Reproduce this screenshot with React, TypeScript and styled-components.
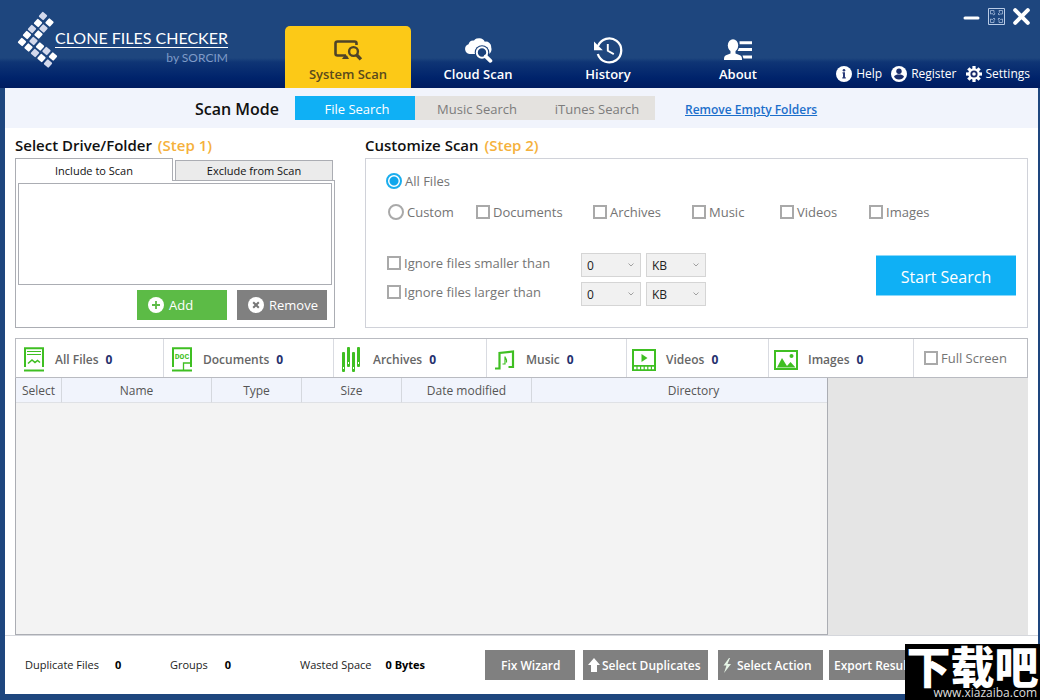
import React from "react";
import styled, { createGlobalStyle, css } from "styled-components";

const GlobalStyle = createGlobalStyle`
  *, *::before, *::after { box-sizing: border-box; }
  body { margin: 0; background: #1e467e; }
  body, button, select, input { font-family: "Open Sans", "Noto Sans", "Noto Sans CJK SC", sans-serif; }
  button { border: 0; padding: 0; cursor: pointer; }
  svg { display: block; flex: none; }
`;

/* ---------- Window frame ---------- */

const Window = styled.div`
  position: relative;
  display: flex;
  flex-direction: column;
  min-height: 100vh;
  padding: 0 2px 6px 5px;
  background: #1e467e;
`;

const Header = styled.header`
  display: flex;
  height: 88px;
  margin: 0 -2px 0 -5px;
  padding-left: 5px;
  background: linear-gradient(#1e467e 0, #1e467e 58px, #0f3575 62px, #00236b 78px, #001c60 88px);
`;

const Brand = styled.div`
  display: flex;
  flex: none;
  width: 278px;
  padding: 12px 0 0 13px;
`;

const BrandText = styled.div`
  padding-top: 16px;
  text-align: right;
`;

const BrandName = styled.div`
  border-bottom: 1px solid #fff;
  color: #fff;
  font-family: Lato, "Open Sans", sans-serif;
  font-size: 16px;
  line-height: 19px;
  white-space: nowrap;
`;

const BrandBy = styled.div`
  color: #7f9bc8;
  font-family: Lato, "Open Sans", sans-serif;
  font-size: 12px;
  line-height: 20px;
`;

const Nav = styled.nav`
  display: flex;
  align-items: flex-end;
`;

const NavTab = styled.button<{ $active?: boolean }>`
  display: flex;
  flex-direction: column;
  align-items: center;
  width: 126px;
  height: 62px;
  margin: 0 2px;
  padding-top: 10px;
  border-radius: 5px 5px 0 0;
  background: ${(p) => (p.$active ? "#fcc917" : "transparent")};
  color: ${(p) => (p.$active ? "#5a4a1c" : "#fff")};
  font-size: 13px;
  font-weight: 600;
  line-height: 20px;
`;

const HeaderSide = styled.div`
  display: flex;
  flex: 1;
  flex-direction: column;
  align-items: flex-end;
  justify-content: space-between;
  padding: 8px 10px 4px 0;
`;

const WindowControls = styled.div`
  display: flex;
  gap: 8px;
`;

const ControlButton = styled.button`
  width: 17px;
  height: 17px;
  background: transparent;
  color: #fff;
`;

const HeaderLinks = styled.div`
  display: flex;
  gap: 9px;
`;

const HeaderLink = styled.a`
  display: flex;
  align-items: center;
  gap: 4px;
  color: #fff;
  font-size: 12px;
  line-height: 20px;
  text-decoration: none;
`;

/* ---------- Scan mode bar ---------- */

const ModeBar = styled.div`
  display: flex;
  align-items: center;
  height: 40px;
  padding: 0 0 0 190px;
  background: #f1f4fc;
`;

const ModeLabel = styled.div`
  width: 100px;
  padding-top: 2px;
  color: #111;
  font-size: 16px;
  font-weight: 600;
`;

const ModeButton = styled.button<{ $active?: boolean }>`
  width: 120px;
  height: 24px;
  padding: 1px 0 0 4px;
  background: ${(p) => (p.$active ? "#0fb0f5" : "#e4e2df")};
  color: ${(p) => (p.$active ? "#fff" : "#7c7c7c")};
  font-size: 13px;
`;

const EmptyLink = styled.a`
  margin-left: 30px;
  padding-top: 2px;
  color: #1c6fcb;
  font-size: 12px;
  font-weight: 600;
`;

/* ---------- Main area ---------- */

const Main = styled.main`
  display: flex;
  flex: 1;
  flex-direction: column;
  padding: 8px 10px 0;
  background: #fff;
`;

const Steps = styled.div`
  display: flex;
  gap: 30px;
`;

const DriveStep = styled.section`
  flex: none;
  width: 320px;
`;

const CustomizeStep = styled.section`
  display: flex;
  flex: 1;
  flex-direction: column;
`;

const StepTitle = styled.h2`
  margin: 0;
  height: 22px;
  color: #111;
  font-size: 15px;
  font-weight: 600;
  line-height: 18px;
  white-space: nowrap;

  span { margin-left: 2px; color: #f5b13c; }
`;

const FolderTabs = styled.div`
  display: flex;
  align-items: flex-end;
  gap: 2px;
  height: 22px;
`;

const FolderTab = styled.button<{ $active?: boolean }>`
  width: 158px;
  height: 20px;
  border: 1px solid #abadb3;
  border-bottom: 0;
  background: #ebebeb;
  color: #111;
  font-size: 11px;
  line-height: 19px;

  ${(p) =>
    p.$active &&
    css`
      position: relative;
      height: 23px;
      margin-bottom: -1px;
      background: #fff;
    `}
`;

const FolderBox = styled.div`
  height: 148px;
  padding: 2px;
  border: 1px solid #abadb3;
`;

const FolderList = styled.div`
  height: 102px;
  border: 1px solid #abadb3;
`;

const FolderActions = styled.div`
  display: flex;
  justify-content: flex-end;
  gap: 10px;
  padding: 5px 5px 0 0;
`;

const FolderButton = styled.button<{ $tone: string }>`
  display: flex;
  align-items: center;
  gap: 5px;
  width: 90px;
  height: 30px;
  padding-left: 11px;
  background: ${(p) => p.$tone};
  color: #fff;
  font-size: 13px;
`;

const CustomizeBox = styled.div`
  display: flex;
  flex: 1;
  flex-direction: column;
  padding: 12px 11px 0 20px;
  border: 1px solid #d0d2d9;
`;

const OptionRow = styled.div`
  display: grid;
  grid-template-columns: 88px 117px 99px 88px 89px auto;
  margin: 11px 0 0 2px;
`;

const Option = styled.label`
  display: flex;
  align-items: center;
  gap: 3px;
  color: #747474;
  font-size: 13px;
  line-height: 20px;
  white-space: nowrap;
`;

const Check = styled.input.attrs({ type: "checkbox" })`
  appearance: none;
  width: 14px;
  height: 14px;
  margin: 0;
  border: 2px solid #a9a9a9;
  background: #fff;

  &:checked { background: #0fb0f5; }
`;

const Radio = styled.input.attrs({ type: "radio" })`
  appearance: none;
  width: 16px;
  height: 16px;
  margin: 0;
  border: 2px solid #a9a9a9;
  border-radius: 50%;
  background: #fff;

  &:checked {
    border-color: #1aaeee;
    background: radial-gradient(circle, #0fa6ec 0 4px, #fff 5px);
  }
`;

const FilterArea = styled.div`
  display: flex;
  justify-content: space-between;
  margin: 31px 0 0 1px;
`;

const Filters = styled.div`
  display: flex;
  flex-direction: column;
  gap: 5px;
`;

const FilterRow = styled.div`
  display: flex;
  align-items: flex-start;
  gap: 5px;

  label { width: 189px; }
`;

const SizeSelect = styled.select`
  appearance: none;
  width: 60px;
  height: 24px;
  padding: 0 5px;
  border: 1px solid #d5d5d5;
  border-radius: 0;
  background: #f1f1f1
    url("data:image/svg+xml,%3Csvg xmlns='http://www.w3.org/2000/svg' width='6' height='4'%3E%3Cpath d='M0.5 0.5L3 3L5.5 0.5' fill='none' stroke='%23a0a0a0'/%3E%3C/svg%3E")
    no-repeat right 6px center;
  color: #222;
  font-size: 12px;
`;

const StartButton = styled.button`
  width: 140px;
  height: 41px;
  margin-top: 2px;
  padding-top: 2px;
  border-top: 1px solid #8ad8fa;
  border-bottom: 1px solid #8ad8fa;
  background: #0fb0f5;
  color: #fff;
  font-size: 16px;
`;

/* ---------- Category counters ---------- */

const Categories = styled.div`
  display: grid;
  grid-template-columns: 148fr 170fr 153fr 140fr 142fr 145fr 113fr;
  height: 40px;
  margin-top: 10px;
  border: 1px solid #b9bbc1;
`;

const Category = styled.button<{ $wide?: boolean }>`
  display: flex;
  align-items: center;
  gap: ${(p) => (p.$wide ? "10px" : "11px")};
  padding: 3px 0 0 ${(p) => (p.$wide ? "5px" : "8px")};
  border-right: 1px solid #d9dbe1;
  background: #fff;
  color: #666;
  font-size: 12px;
  font-weight: 600;
  white-space: nowrap;

  b { margin-left: 7px; color: #25306e; font-weight: 700; }
`;

const FullScreen = styled.div`
  display: flex;
  align-items: center;
  padding-left: 10px;
`;

/* ---------- Results ---------- */

const Results = styled.div`
  display: flex;
  flex: 1;
  min-height: 257px;
  background: #e5e5e5;
`;

const TableArea = styled.div`
  flex: 1;
  border: 1px solid #abadb3;
  border-top: 0;
  background: #f3f3f3;
`;

const Preview = styled.aside`
  flex: none;
  width: 200px;
`;

const Table = styled.table`
  width: 100%;
  border-collapse: separate;
  border-spacing: 0;
  table-layout: fixed;
`;

const HeadCell = styled.th<{ $width?: number }>`
  width: ${(p) => (p.$width ? `${p.$width}px` : "auto")};
  height: 25px;
  padding: 0;
  border-right: 1px solid #d5d8de;
  border-bottom: 1px solid #dfe1e5;
  background: #f1f4fc;
  color: #555;
  font-size: 12px;
  font-weight: 400;

  &:last-child { border-right: 0; padding-left: 28px; }
`;

/* ---------- Footer ---------- */

const Footer = styled.footer`
  display: flex;
  align-items: center;
  height: 59px;
  padding: 0 10px 0 20px;
  border-top: 1px solid #d5d7dc;
  background: #fff;
`;

const Stat = styled.div<{ $width: number; $gap: number }>`
  display: flex;
  flex: none;
  gap: ${(p) => p.$gap}px;
  width: ${(p) => p.$width}px;
  padding-bottom: 2px;
  color: #222;
  font-size: 11px;
  white-space: nowrap;

  b { color: #000; }
`;

const FooterActions = styled.div`
  display: flex;
`;

const ActionButton = styled.button<{ $width: number; $space?: number; $gap?: number; $start?: number }>`
  display: flex;
  align-items: center;
  flex: none;
  gap: ${(p) => p.$gap ?? 0}px;
  width: ${(p) => p.$width}px;
  height: 30px;
  margin-right: ${(p) => p.$space ?? 0}px;
  padding-left: ${(p) => p.$start ?? 5}px;
  background: #808080;
  color: #fff;
  font-size: 12px;
  font-weight: 600;
  white-space: nowrap;
`;

const Watermark = styled.div`
  position: absolute;
  right: 0;
  bottom: 0;
  width: 135px;
  height: 56px;
  overflow: hidden;
  background: #000;
  color: #fff;
  text-align: center;
`;

const WatermarkName = styled.div`
  font-family: "Noto Sans CJK SC", sans-serif;
  font-size: 44px;
  font-weight: 900;
  line-height: 42px;
  white-space: nowrap;
`;

const WatermarkUrl = styled.div`
  padding-right: 3px;
  color: #ddd;
  font-size: 12px;
  line-height: 14px;
  text-align: right;
`;

/* ---------- Icons ---------- */

const LOGO_TILES: [number, number, boolean][] = [
  [25, 4, true], [31.5, 10.5, false], [20, 11, false], [25.5, 16.5, true],
  [14, 17, true], [20.5, 22.5, false], [9, 23, false], [15.5, 29, true],
  [4, 30, false], [10.5, 35.5, false], [22, 34.5, false], [17, 41, true],
  [28.5, 39, true], [23.5, 46, false], [35, 44.5, false], [30, 51.5, true],
];

const LogoIcon = () => (
  <svg width="37" height="56" viewBox="0 0 37 56" overflow="visible" aria-hidden="true">
    {LOGO_TILES.map(([x, y, dim]) => (
      <rect
        key={`${x}-${y}`}
        x={x - 3.2}
        y={y - 3.2}
        width="6.4"
        height="6.4"
        rx="1"
        fill={dim ? "#d3d9ec" : "#fff"}
        transform={`rotate(42 ${x} ${y})`}
      />
    ))}
  </svg>
);

const SystemScanIcon = () => (
  <svg width="30" height="28" viewBox="0 0 30 28" fill="none" stroke="#4f4428">
    <path d="M23.5 9V7.5a2 2 0 0 0-2-2H4.500a2 2 0 0 0-2 2v10a2 2 0 0 0 2 2H13" strokeWidth="2.600" />
    <path d="M9 23l2.500-3.500h2.500l2 3.500z" fill="#4f4428" stroke="none" />
    <circle cx="20.500" cy="15.500" r="4.400" strokeWidth="2.400" />
    <path d="M23.600 18.800l4.300 4.600" strokeWidth="3.400" />
  </svg>
);

const CloudScanIcon = () => (
  <svg width="30" height="28" viewBox="0 0 30 28">
    <path d="M6.500 18a5 5 0 0 1-1-9.700A5 5 0 0 1 11 4.500a6.500 6.500 0 0 1 10.800 1.200 5.400 5.400 0 0 1 6.400 5.800c1 3-.5 6-3 6.500z" fill="#fff" />
    <circle cx="19" cy="16.500" r="7.300" fill="#1b427b" />
    <circle cx="19" cy="16.500" r="5.200" fill="none" stroke="#fff" strokeWidth="2" />
    <path d="M22.800 20.400l4.600 4.400" stroke="#fff" strokeWidth="3.800" strokeLinecap="round" />
  </svg>
);

const HistoryIcon = () => (
  <svg width="30" height="28" viewBox="0 0 30 28" fill="none" stroke="#fff">
    <path d="M5 10.200A12 12 0 1 1 4.800 18" strokeWidth="2.300" />
    <path d="M1 5.500v8.800h8.800z" fill="#fff" stroke="none" />
    <path d="M14.800 8v6.800l6 3.300" strokeWidth="1.900" />
  </svg>
);

const AboutIcon = () => (
  <svg width="30" height="28" viewBox="0 0 30 28" fill="#fff">
    <ellipse cx="10" cy="9.500" rx="5.200" ry="6.200" />
    <path d="M7.500 14h5v3.500l4.500 1.800c1.800.8 2 2 2 4.700H1c0-2.700.2-3.900 2-4.700l4.500-1.800z" />
    <path d="M16.500 5.200H29v3H16.600zM16 12h13v3H14.600zM19.500 19.500H29v3h-8.500z" />
  </svg>
);

const HelpIcon = () => (
  <svg width="16" height="16" viewBox="0 0 16 16">
    <circle cx="8" cy="8" r="8" fill="#fff" />
    <circle cx="8" cy="4.200" r="1.300" fill="#2b3b78" />
    <path d="M6.500 6.300h2.500v5h.8v1.200H6.300v-1.200H7V7.500h-.5z" fill="#2b3b78" />
  </svg>
);

const RegisterIcon = () => (
  <svg width="16" height="16" viewBox="0 0 16 16">
    <circle cx="8" cy="8" r="8" fill="#fff" />
    <circle cx="8" cy="5.300" r="2.700" fill="#1a2d6b" />
    <path d="M3 10.500c1.200-1.500 2.500-2 5-2s3.800.5 5 2c-.8 1.900-2.500 3-5 3s-4.200-1.100-5-3z" fill="#1a2d6b" />
  </svg>
);

const SettingsIcon = () => (
  <svg width="16" height="16" viewBox="0 0 16 16">
    {[0, 45, 90, 135].map((a) => (
      <rect key={a} x="6.400" y="0" width="3.200" height="16" fill="#fff" transform={`rotate(${a} 8 8)`} />
    ))}
    <circle cx="8" cy="8" r="5.800" fill="#fff" />
    <circle cx="8" cy="8" r="2.700" fill="none" stroke="#17296a" strokeWidth="1.800" />
  </svg>
);

const MinimizeIcon = () => (
  <svg width="17" height="17" viewBox="0 0 17 17">
    <path d="M2 10h13" stroke="#fff" strokeWidth="3" strokeLinecap="round" />
  </svg>
);

const MaximizeIcon = () => (
  <svg width="17" height="17" viewBox="0 0 17 17" fill="none" stroke="#b9cbe6">
    <path d="M.5.5h16v16H.5z" />
    <path d="M2.500 6V2.500H6V4.500L7 6 5.500 7 4.500 5.500zM11 2.500h3.500V6h-2L11 7 10 6l1.500-1.500zM2.500 11v3.500H6v-2L7 11 6 10l-1.500 1.500zM14.500 11v3.500H11v-2L10 11l1-1 1.500 1.500z" strokeWidth=".7" />
  </svg>
);

const CloseIcon = () => (
  <svg width="17" height="17" viewBox="0 0 17 17">
    <path d="M2.200 2.200l12.600 12.600M14.800 2.200L2.200 14.800" stroke="#fff" strokeWidth="4" strokeLinecap="round" />
  </svg>
);

const AddIcon = () => (
  <svg width="16" height="16" viewBox="0 0 16 16">
    <circle cx="8" cy="8" r="8" fill="#fff" />
    <path d="M8 4v8M4 8h8" stroke="#5cbb46" strokeWidth="1.800" />
  </svg>
);

const RemoveIcon = () => (
  <svg width="16" height="16" viewBox="0 0 16 16">
    <circle cx="8" cy="8" r="8" fill="#fff" />
    <path d="M5.200 5.200l5.600 5.600M10.800 5.200l-5.600 5.600" stroke="#777" strokeWidth="2" />
  </svg>
);

const GREEN = "#3fbf22";

const AllFilesIcon = () => (
  <svg width="20" height="25" viewBox="0 0 20 25" fill="none" stroke={GREEN}>
    <path d="M1 20V1.200h18V20" strokeWidth="2" />
    <path d="M0 23.500h20" strokeWidth="2" />
    <path d="M3 4.500h14M3 7.500h14" strokeWidth="1.200" />
    <path d="M4 16.500l4-3.500 3 2.500 2.500-2 2.500 2" strokeWidth="1.600" />
  </svg>
);

const DocLabel = styled.text`
  fill: #3fbf22;
  stroke: none;
  font-family: "Liberation Mono", monospace;
  font-size: 8px;
`;

const DocumentsIcon = () => (
  <svg width="20" height="25" viewBox="0 0 20 25" fill="none" stroke={GREEN}>
    <path d="M1 20V1.200h18V20" strokeWidth="2" />
    <path d="M0 23.500h20" strokeWidth="2" />
    <path d="M11.500 23v-7H19" strokeWidth="1.300" />
    <DocLabel x="10" y="12" textAnchor="middle">DOC</DocLabel>
  </svg>
);

const ArchivesIcon = () => (
  <svg width="20" height="25" viewBox="0 0 20 25">
    {[[0, 5], [5, 0], [10, 5], [15, 0]].map(([x, y]) => (
      <g key={x}>
        <rect x={x} y={y} width="3" height="20" rx="1" fill={GREEN} />
        <rect x={x + 1} y={y + 15} width="1" height="2" fill="#fff" />
      </g>
    ))}
  </svg>
);

const MusicIcon = () => (
  <svg width="20" height="25" viewBox="0 0 20 25" fill="none" stroke={GREEN} strokeWidth="2.200">
    <path d="M0 21.500h4.500V6l13.500-1.500V20h-4.500" />
    <path d="M7.500 17h2.500V9.500c0 2 2.500 2.500 1.500 6" strokeWidth="1.200" />
  </svg>
);

const VideosIcon = () => (
  <svg width="24" height="22" viewBox="0 0 24 22">
    <path d="M0 0h24v22H0z" fill={GREEN} />
    <path d="M2 2h20v14H2z" fill="#fff" />
    <path d="M9.500 5l6 4-6 4z" fill={GREEN} />
    <path d="M2 19h20" stroke="#fff" strokeWidth="2.400" strokeDasharray="2.400 1.200" />
  </svg>
);

const ImagesIcon = () => (
  <svg width="24" height="20" viewBox="0 0 24 20">
    <path d="M1 1h22v18H1z" fill="#fff" stroke={GREEN} strokeWidth="2" />
    <path d="M3 17.500L8 8l4 6.500 1 1.500 3.500-4 5 5.500z" fill={GREEN} />
    <circle cx="17.500" cy="6" r="2" fill={GREEN} />
  </svg>
);

const UpIcon = () => (
  <svg width="12" height="14" viewBox="0 0 12 14">
    <path d="M6 0l6 7H9v7H3V7H0z" fill="#fff" />
  </svg>
);

const BoltIcon = () => (
  <svg width="9" height="15" viewBox="1 0 9 15">
    <path d="M7 0L1.500 7.500H4.500L2 15l7-9H5.500L8 0z" fill="#e6f5e6" />
  </svg>
);

/* ---------- Page ---------- */

const NAV = [
  { label: "System Scan", icon: <SystemScanIcon /> },
  { label: "Cloud Scan", icon: <CloudScanIcon /> },
  { label: "History", icon: <HistoryIcon /> },
  { label: "About", icon: <AboutIcon /> },
];

const CATEGORIES = [
  { label: "All Files", icon: <AllFilesIcon /> },
  { label: "Documents", icon: <DocumentsIcon /> },
  { label: "Archives", icon: <ArchivesIcon /> },
  { label: "Music", icon: <MusicIcon /> },
  { label: "Videos", icon: <VideosIcon />, wide: true },
  { label: "Images", icon: <ImagesIcon />, wide: true },
];

const COLUMNS = [
  { label: "Select", width: 46 },
  { label: "Name", width: 150 },
  { label: "Type", width: 90 },
  { label: "Size", width: 100 },
  { label: "Date modified", width: 130 },
  { label: "Directory" },
];

const FILE_TYPES = ["Documents", "Archives", "Music", "Videos", "Images"];

export default function App() {
  return (
    <>
      <GlobalStyle />
      <Window>
        <Header>
          <Brand>
            <LogoIcon />
            <BrandText>
              <BrandName>CLONE FILES CHECKER</BrandName>
              <BrandBy>by SORCIM</BrandBy>
            </BrandText>
          </Brand>
          <Nav>
            {NAV.map((item, i) => (
              <NavTab key={item.label} $active={i === 0}>
                {item.icon}
                {item.label}
              </NavTab>
            ))}
          </Nav>
          <HeaderSide>
            <WindowControls>
              <ControlButton aria-label="Minimize"><MinimizeIcon /></ControlButton>
              <ControlButton aria-label="Maximize"><MaximizeIcon /></ControlButton>
              <ControlButton aria-label="Close"><CloseIcon /></ControlButton>
            </WindowControls>
            <HeaderLinks>
              <HeaderLink href="#help"><HelpIcon />Help</HeaderLink>
              <HeaderLink href="#register"><RegisterIcon />Register</HeaderLink>
              <HeaderLink href="#settings"><SettingsIcon />Settings</HeaderLink>
            </HeaderLinks>
          </HeaderSide>
        </Header>

        <ModeBar>
          <ModeLabel>Scan Mode</ModeLabel>
          <ModeButton $active>File Search</ModeButton>
          <ModeButton>Music Search</ModeButton>
          <ModeButton>iTunes Search</ModeButton>
          <EmptyLink href="#empty-folders">Remove Empty Folders</EmptyLink>
        </ModeBar>

        <Main>
          <Steps>
            <DriveStep>
              <StepTitle>Select Drive/Folder <span>(Step 1)</span></StepTitle>
              <FolderTabs>
                <FolderTab $active>Include to Scan</FolderTab>
                <FolderTab>Exclude from Scan</FolderTab>
              </FolderTabs>
              <FolderBox>
                <FolderList />
                <FolderActions>
                  <FolderButton $tone="#5cbb46"><AddIcon />Add</FolderButton>
                  <FolderButton $tone="#808080"><RemoveIcon />Remove</FolderButton>
                </FolderActions>
              </FolderBox>
            </DriveStep>

            <CustomizeStep>
              <StepTitle>Customize Scan <span>(Step 2)</span></StepTitle>
              <CustomizeBox>
                <Option><Radio name="files" defaultChecked />All Files</Option>
                <OptionRow>
                  <Option><Radio name="files" />Custom</Option>
                  {FILE_TYPES.map((type) => (
                    <Option key={type}><Check />{type}</Option>
                  ))}
                </OptionRow>
                <FilterArea>
                  <Filters>
                    {["smaller", "larger"].map((kind) => (
                      <FilterRow key={kind}>
                        <Option><Check />Ignore files {kind} than</Option>
                        <SizeSelect aria-label={`Size, ${kind} than`}><option>0</option></SizeSelect>
                        <SizeSelect aria-label={`Unit, ${kind} than`}>
                          <option>KB</option>
                          <option>MB</option>
                          <option>GB</option>
                        </SizeSelect>
                      </FilterRow>
                    ))}
                  </Filters>
                  <StartButton>Start Search</StartButton>
                </FilterArea>
              </CustomizeBox>
            </CustomizeStep>
          </Steps>

          <Categories>
            {CATEGORIES.map((c) => (
              <Category key={c.label} $wide={c.wide}>
                {c.icon}
                <span>{c.label}<b>0</b></span>
              </Category>
            ))}
            <FullScreen>
              <Option><Check />Full Screen</Option>
            </FullScreen>
          </Categories>

          <Results>
            <TableArea>
              <Table>
                <thead>
                  <tr>
                    {COLUMNS.map((c) => (
                      <HeadCell key={c.label} $width={c.width}>{c.label}</HeadCell>
                    ))}
                  </tr>
                </thead>
              </Table>
            </TableArea>
            <Preview />
          </Results>
        </Main>

        <Footer>
          <Stat $width={145} $gap={16}>Duplicate Files <b>0</b></Stat>
          <Stat $width={130} $gap={17}>Groups <b>0</b></Stat>
          <Stat $width={185} $gap={14}>Wasted Space <b>0 Bytes</b></Stat>
          <FooterActions>
            <ActionButton $width={90} $space={8} $start={16}>Fix Wizard</ActionButton>
            <ActionButton $width={125} $space={10} $gap={2}><UpIcon />Select Duplicates</ActionButton>
            <ActionButton $width={105} $space={6} $gap={5}><BoltIcon />Select Action</ActionButton>
            <ActionButton $width={90}>Export Results</ActionButton>
          </FooterActions>
        </Footer>

        <Watermark>
          <WatermarkName>下载吧</WatermarkName>
          <WatermarkUrl>www.xiazaiba.com</WatermarkUrl>
        </Watermark>
      </Window>
    </>
  );
}
